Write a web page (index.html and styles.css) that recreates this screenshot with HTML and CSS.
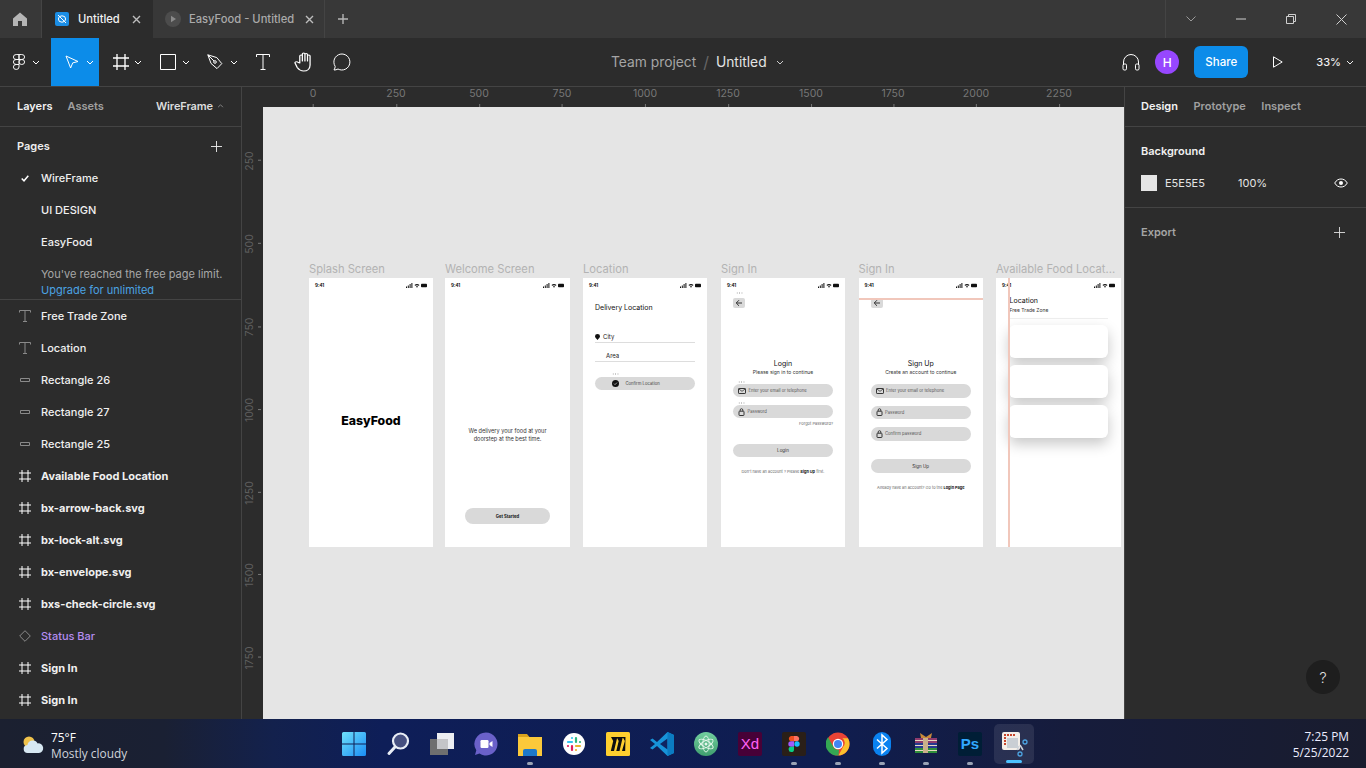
FILE: index.html
```html
<!DOCTYPE html>
<html lang="en">
<head>
<meta charset="utf-8">
<title>Untitled – Figma</title>
<link rel="stylesheet" href="styles.css">
</head>
<body>
<svg class="defs" width="0" height="0" aria-hidden="true">
  <symbol id="i-frame" viewBox="0 0 12 12"><path d="M3 0v12M9 0v12M0 3h12M0 9h12" fill="none" stroke="currentColor"/></symbol>
  <symbol id="i-text" viewBox="0 0 12 12"><path d="M.5 2.500V.5h11v2M6 .5v11M4 11.500h4" fill="none" stroke="currentColor"/></symbol>
  <symbol id="i-rect" viewBox="0 0 12 6"><path d="M1.500 1.500h9v3h-9z" fill="none" stroke="currentColor"/></symbol>
  <symbol id="i-chev" viewBox="0 0 8 5"><path d="M1 1l3 3 3-3" fill="none" stroke="currentColor"/></symbol>
  <symbol id="i-plus" viewBox="0 0 12 12"><path d="M6 0v12M0 6h12" fill="none" stroke="currentColor"/></symbol>
  <symbol id="i-signal" viewBox="0 0 21 5">
    <path d="M0 3.500h1V5H0zM1.800 2.500h1V5h-1zM3.600 1h1v4h-1zM5.400 0h1v5h-1z" fill="#111"/>
    <path d="M8.500 2a4 4 0 0 1 5 0l-.7.800a3 3 0 0 0-3.600 0zM10 3.400a1.600 1.600 0 0 1 2 0L11 4.800z" fill="#111"/>
    <rect x="15" y=".8" width="6" height="3.400" rx=".8" fill="#111"/>
  </symbol>
  <symbol id="i-mail" viewBox="0 0 8 6"><rect x=".5" y=".5" width="7" height="5" rx=".6" fill="none" stroke="#222" stroke-width=".9"/><path d="M.8 1l3.200 2.300L7.200 1" fill="none" stroke="#222" stroke-width=".7"/></symbol>
  <symbol id="i-lock" viewBox="0 0 7 8"><rect x="1" y="3.200" width="5" height="4.300" rx=".6" fill="none" stroke="#222" stroke-width=".9"/><path d="M2.200 3.200V2a1.300 1.300 0 0 1 2.600 0v1.200" fill="none" stroke="#222" stroke-width=".8"/></symbol>
  <symbol id="i-back" viewBox="0 0 8 8"><path d="M7 4H1.500M4 1.200L1.200 4 4 6.800" fill="none" stroke="#222" stroke-width=".9"/></symbol>
</svg>

<header class="titlebar">
  <div class="home">
    <svg width="14" height="14" viewBox="0 0 14 14"><path d="M7 .5L14 6.500V14H9V9H5v5H0V6.500z" fill="#b5b5b5"/></svg>
  </div>
  <div class="tab tab-active">
    <svg class="tab-icon" width="14" height="14" viewBox="0 0 14 14"><rect width="14" height="14" rx="2" fill="#1b8de4"/><ellipse cx="7" cy="7" rx="3.600" ry="3.200" fill="none" stroke="#fff" stroke-width="1"/><path d="M3 3l8 8" stroke="#fff" stroke-width="1"/></svg>
    <span class="tab-name">Untitled</span>
    <svg class="tab-x" width="9" height="9" viewBox="0 0 9 9"><path d="M1 1l7 7M8 1L1 8" stroke="#bdbdbd" stroke-width="1.400"/></svg>
  </div>
  <div class="tab tab-other">
    <svg class="tab-icon" width="16" height="16" viewBox="0 0 16 16"><circle cx="8" cy="8" r="8" fill="#4c4c4c"/><path d="M6 4.800v6.400L11 8z" fill="#8a8a8a"/></svg>
    <span class="tab-name">EasyFood - Untitled</span>
    <svg class="tab-x" width="9" height="9" viewBox="0 0 9 9"><path d="M1 1l7 7M8 1L1 8" stroke="#bdbdbd" stroke-width="1.400"/></svg>
  </div>
  <div class="newtab">
    <svg width="10" height="10" viewBox="0 0 10 10"><path d="M5 0v10M0 5h10" stroke="#b5b5b5" stroke-width="1.400"/></svg>
  </div>
  <div class="spacer"></div>
  <div class="winctl">
    <div class="winbtn"><svg width="10" height="6" viewBox="0 0 10 6"><path d="M.5.500L5 5 9.500.500" fill="none" stroke="#9a9a9a"/></svg></div>
    <div class="winbtn"><svg width="10" height="2" viewBox="0 0 10 2"><path d="M0 1h10" stroke="#cfcfcf"/></svg></div>
    <div class="winbtn"><svg width="10" height="10" viewBox="0 0 10 10"><path d="M.5 2.500h7v7h-7zM2.500 2.500v-2h7v7h-2" fill="none" stroke="#cfcfcf"/></svg></div>
    <div class="winbtn"><svg width="11" height="11" viewBox="0 0 11 11"><path d="M.5.500l10 10M10.500.500l-10 10" stroke="#cfcfcf"/></svg></div>
  </div>
</header>

<div class="toolbar">
  <div class="tools">
    <div class="tool tool-menu">
      <svg width="12" height="16" viewBox="0 0 12 18" preserveAspectRatio="none"><g fill="none" stroke="#fff" stroke-width="1"><path d="M6 .6H3.200a2.700 2.700 0 0 0 0 5.600H6z"/><path d="M6 .6h2.800a2.700 2.700 0 0 1 0 5.600H6z"/><path d="M6 6.200H3.200a2.700 2.700 0 0 0 0 5.600H6z"/><circle cx="8.800" cy="9" r="2.800"/><path d="M6 11.800H3.200a2.800 2.800 0 1 0 2.800 2.800z"/></g></svg>
      <svg class="chev" width="8" height="5"><use href="#i-chev"/></svg>
    </div>
    <div class="tool tool-move">
      <svg width="14" height="14" viewBox="0 0 14 14"><path d="M1 1l12 5.500-5.300 1.400L5.600 13z" fill="none" stroke="#fff" stroke-width="1"/></svg>
      <svg class="chev" width="8" height="5"><use href="#i-chev"/></svg>
    </div>
    <div class="tool tool-frame">
      <svg width="16" height="16"><use href="#i-frame"/></svg>
      <svg class="chev" width="8" height="5"><use href="#i-chev"/></svg>
    </div>
    <div class="tool tool-shape">
      <svg width="16" height="16" viewBox="0 0 16 16"><path d="M.5.500h15v15H.5z" fill="none" stroke="#fff"/></svg>
      <svg class="chev" width="8" height="5"><use href="#i-chev"/></svg>
    </div>
    <div class="tool tool-pen">
      <svg width="16" height="16" viewBox="0 0 16 16"><path d="M.8.800l9 2.800 5 6-4.800 5-6-5.200zM.8.800l6.300 6.300" fill="none" stroke="#fff"/><circle cx="8" cy="8" r="1.300" fill="none" stroke="#fff"/></svg>
      <svg class="chev" width="8" height="5"><use href="#i-chev"/></svg>
    </div>
    <div class="tool tool-text">
      <svg width="14" height="16" viewBox="0 0 14 16"><path d="M.5 3V.5h13V3M7 .5v15M4.500 15.500h5" fill="none" stroke="#fff"/></svg>
    </div>
    <div class="tool tool-hand">
      <svg width="18" height="20" viewBox="0 0 14 20" preserveAspectRatio="none"><path d="M4.500 11V4a1 1 0 0 1 2 0v5V2a1 1 0 0 1 2 0v7V2.500a1 1 0 0 1 2 0V9V4a1 1 0 0 1 2 0v9c0 3.500-2 6-5 6-2.500 0-3.500-1-5-3.500L1 11.500c-.8-1.400 1-2.400 2-1.300z" fill="none" stroke="#fff" stroke-linejoin="round"/></svg>
    </div>
    <div class="tool tool-comment">
      <svg width="18" height="18" viewBox="0 0 18 18"><path d="M1 17c.8-1.500 1.200-2.500 1.200-3.600A8 8 0 1 1 5 16c-1.500.8-2.500 1-4 1z" fill="none" stroke="#fff" stroke-linejoin="round"/></svg>
    </div>
  </div>
  <div class="filename">
    <span class="team">Team project</span><span class="slash">/</span><span class="fname">Untitled</span>
    <svg class="chev" width="8" height="5"><use href="#i-chev"/></svg>
  </div>
  <div class="actions">
    <svg class="phones" width="18" height="18" viewBox="0 0 18 18"><path d="M1.500 12V9a7.500 7.500 0 0 1 15 0v3" fill="none" stroke="#fff"/><rect x="1" y="11" width="3.500" height="6" rx="1.200" fill="none" stroke="#fff"/><rect x="13.500" y="11" width="3.500" height="6" rx="1.200" fill="none" stroke="#fff"/></svg>
    <div class="avatar">H</div>
    <div class="share">Share</div>
    <svg class="play" width="10" height="12" viewBox="0 0 10 12"><path d="M.5.800v10.400L9.200 6z" fill="none" stroke="#fff"/></svg>
    <div class="zoomlvl">33% <svg class="chev" width="8" height="5"><use href="#i-chev"/></svg></div>
  </div>
</div>

<main class="workspace">
  <aside class="left">
    <div class="ptabs">
      <span class="ptab ptab-on">Layers</span><span class="ptab">Assets</span>
      <span class="ppage">WireFrame <svg class="up" width="7" height="4" viewBox="0 0 8 5"><path d="M1 4l3-3 3 3" fill="none" stroke="#999"/></svg></span>
    </div>
    <div class="pages-head"><span>Pages</span><svg width="11" height="11"><use href="#i-plus"/></svg></div>
    <div class="page-row"><svg class="check" width="8" height="7" viewBox="0 0 8 7"><path d="M.7 3.500L3 5.800 7.300.8" fill="none" stroke="#fff" stroke-width="1.500"/></svg><span>WireFrame</span></div>
    <div class="page-row"><span>UI DESIGN</span></div>
    <div class="page-row"><span>EasyFood</span></div>
    <div class="limit">You've reached the free page limit.<br><span class="upgrade">Upgrade for unlimited</span></div>
    <ul class="layers">
      <li class="layer"><svg class="lic lic-dim" width="12" height="12"><use href="#i-text"/></svg>Free Trade Zone</li>
      <li class="layer"><svg class="lic lic-dim" width="12" height="12"><use href="#i-text"/></svg>Location</li>
      <li class="layer"><svg class="lic lic-dim" width="12" height="6"><use href="#i-rect"/></svg>Rectangle 26</li>
      <li class="layer"><svg class="lic lic-dim" width="12" height="6"><use href="#i-rect"/></svg>Rectangle 27</li>
      <li class="layer"><svg class="lic lic-dim" width="12" height="6"><use href="#i-rect"/></svg>Rectangle 25</li>
      <li class="layer layer-b"><svg class="lic" width="12" height="12"><use href="#i-frame"/></svg>Available Food Location</li>
      <li class="layer layer-b"><svg class="lic" width="12" height="12"><use href="#i-frame"/></svg>bx-arrow-back.svg</li>
      <li class="layer layer-b"><svg class="lic" width="12" height="12"><use href="#i-frame"/></svg>bx-lock-alt.svg</li>
      <li class="layer layer-b"><svg class="lic" width="12" height="12"><use href="#i-frame"/></svg>bx-envelope.svg</li>
      <li class="layer layer-b"><svg class="lic" width="12" height="12"><use href="#i-frame"/></svg>bxs-check-circle.svg</li>
      <li class="layer layer-c"><svg class="lic lic-dim" width="12" height="12" viewBox="0 0 12 12"><path d="M6 .7L11.300 6 6 11.300.7 6z" fill="none" stroke="currentColor"/></svg>Status Bar</li>
      <li class="layer layer-b"><svg class="lic" width="12" height="12"><use href="#i-frame"/></svg>Sign In</li>
      <li class="layer layer-b"><svg class="lic" width="12" height="12"><use href="#i-frame"/></svg>Sign In</li>
    </ul>
  </aside>

  <section class="stage">
    <div class="ruler-top">
      <span class="rt rt0">0</span><span class="rt rt1">250</span><span class="rt rt2">500</span><span class="rt rt3">750</span><span class="rt rt4">1000</span><span class="rt rt5">1250</span><span class="rt rt6">1500</span><span class="rt rt7">1750</span><span class="rt rt8">2000</span><span class="rt rt9">2250</span>
    </div>
    <div class="stage-body">
      <div class="ruler-left">
        <span class="rl rl1">250</span><span class="rl rl2">500</span><span class="rl rl3">750</span><span class="rl rl4">1000</span><span class="rl rl5">1250</span><span class="rl rl6">1500</span><span class="rl rl7">1750</span>
      </div>
      <div class="canvas">
        <!-- Splash -->
        <div class="phone p1">
          <div class="plabel">Splash Screen</div>
          <div class="status"><span>9:41</span><svg width="21" height="5"><use href="#i-signal"/></svg></div>
          <div class="logo">EasyFood</div>
        </div>
        <!-- Welcome -->
        <div class="phone p2">
          <div class="plabel">Welcome Screen</div>
          <div class="status"><span>9:41</span><svg width="21" height="5"><use href="#i-signal"/></svg></div>
          <p class="welcome">We delivery your food at your<br>doorstep at the best time.</p>
          <div class="cta">Get Started</div>
        </div>
        <!-- Location -->
        <div class="phone p3">
          <div class="plabel">Location</div>
          <div class="status"><span>9:41</span><svg width="21" height="5"><use href="#i-signal"/></svg></div>
          <div class="inner">
            <div class="loc-title">Delivery Location</div>
            <div class="loc-row loc-city"><svg width="5" height="6" viewBox="0 0 5 6"><path d="M2.500 6C1 4.300 0 3.400 0 2.300a2.500 2.300 0 0 1 5 0C5 3.400 4 4.300 2.500 6z" fill="#111"/></svg><span>City</span></div>
            <div class="loc-row loc-area"><span>Area</span></div>
            <div class="dots dots-loc"></div>
            <div class="pill pill-loc"><svg width="7" height="7" viewBox="0 0 7 7"><circle cx="3.500" cy="3.500" r="3.500" fill="#111"/><path d="M2 3.600l1 1 2-2" fill="none" stroke="#ddd" stroke-width=".7"/></svg><span>Confirm Location</span></div>
          </div>
        </div>
        <!-- Sign in -->
        <div class="phone p4">
          <div class="plabel">Sign In</div>
          <div class="status"><span>9:41</span><svg width="21" height="5"><use href="#i-signal"/></svg></div>
          <div class="inner">
            <div class="dots dots-back"></div>
            <div class="backbtn backbtn-in"><svg width="8" height="8"><use href="#i-back"/></svg></div>
            <div class="au-title">Login</div>
            <div class="au-sub">Please sign in to continue</div>
            <div class="dots dots-field"></div>
            <div class="pill field field-tight"><svg width="8" height="6"><use href="#i-mail"/></svg><span>Enter your email or telephone</span></div>
            <div class="dots dots-field"></div>
            <div class="pill field field-tight"><svg width="7" height="8"><use href="#i-lock"/></svg><span>Password</span></div>
            <div class="forgot">Forgot Password?</div>
            <div class="pill submit submit-in">Login</div>
            <div class="foot">Don't have an account ? Please <b>Sign Up</b> first.</div>
          </div>
        </div>
        <!-- Sign up -->
        <div class="phone p5">
          <div class="plabel">Sign In</div>
          <div class="status"><span>9:41</span><svg width="21" height="5"><use href="#i-signal"/></svg></div>
          <div class="inner">
            <div class="backbtn backbtn-up"><svg width="8" height="8"><use href="#i-back"/></svg></div>
            <div class="au-title">Sign Up</div>
            <div class="au-sub">Create an account to continue</div>
            <div class="pill field"><svg width="8" height="6"><use href="#i-mail"/></svg><span>Enter your email or telephone</span></div>
            <div class="pill field"><svg width="7" height="8"><use href="#i-lock"/></svg><span>Password</span></div>
            <div class="pill field"><svg width="7" height="8"><use href="#i-lock"/></svg><span>Confirm password</span></div>
            <div class="pill submit submit-up">Sign Up</div>
            <div class="foot">Already have an account? Go to the <b>Login Page</b></div>
          </div>
        </div>
        <!-- Available -->
        <div class="phone p6">
          <div class="plabel">Available Food Locat...</div>
          <div class="status"><span>9:41</span><svg width="21" height="5"><use href="#i-signal"/></svg></div>
          <div class="avail">
            <div class="av-title">Location</div>
            <div class="av-sub">Free Trade Zone</div>
            <div class="av-rule"></div>
            <div class="av-card"></div>
            <div class="av-card"></div>
            <div class="av-card"></div>
          </div>
        </div>
        <div class="guide guide-h"></div>
        <div class="guide guide-v"></div>
      </div>
    </div>
  </section>

  <aside class="right">
    <div class="ptabs rtabs">
      <span class="ptab ptab-on">Design</span><span class="ptab">Prototype</span><span class="ptab">Inspect</span>
    </div>
    <div class="bg-sec">
      <div class="bg-title">Background</div>
      <div class="bg-row">
        <span class="swatch"></span><span class="hex">E5E5E5</span><span class="pct">100%</span>
        <svg class="eye" width="14" height="10" viewBox="0 0 14 10"><path d="M.7 5C2.500 2 4.500 1 7 1s4.500 1 6.300 4C11.500 8 9.500 9 7 9S2.500 8 .7 5z" fill="none" stroke="#fff"/><circle cx="7" cy="5" r="2" fill="#fff"/></svg>
      </div>
    </div>
    <div class="export"><span>Export</span><svg width="11" height="11"><use href="#i-plus"/></svg></div>
    <div class="help">?</div>
  </aside>
</main>

<footer class="taskbar">
  <div class="weather">
    <svg width="22" height="18" viewBox="0 0 22 18"><circle cx="7" cy="6" r="5.500" fill="#f0c24b"/><path d="M6 17a4 4 0 0 1-.6-8 5.500 5.500 0 0 1 10.300-1.600A4.800 4.800 0 0 1 17 17z" fill="#d7e8f2"/></svg>
    <div class="wtext"><div class="wtemp">75°F</div><div class="wdesc">Mostly cloudy</div></div>
  </div>
  <div class="tasks">
    <div class="task"><svg width="24" height="24" viewBox="0 0 24 24"><defs><linearGradient id="g-win" x1="0" y1="0" x2="1" y2="1"><stop offset="0" stop-color="#6fe0fb"/><stop offset="1" stop-color="#1a8df5"/></linearGradient></defs><path d="M0 1.500A1.500 1.500 0 0 1 1.500 0h10v11.500H0zM12.500 0h10A1.500 1.500 0 0 1 24 1.500v10H12.500zM0 12.500h11.500V24h-10A1.500 1.500 0 0 1 0 22.500zM12.500 12.500H24v10a1.500 1.500 0 0 1-1.500 1.500h-10z" fill="url(#g-win)"/></svg></div>
    <div class="task"><svg width="24" height="24" viewBox="0 0 24 24"><circle cx="14.500" cy="9" r="7.500" fill="#465080" stroke="#e8edf5" stroke-width="2.200"/><path d="M9 15l-6 6.500" stroke="#e8edf5" stroke-width="3" stroke-linecap="round"/></svg></div>
    <div class="task"><svg width="24" height="24" viewBox="0 0 24 24"><rect x="7" y="1" width="17" height="16" fill="#eceef2"/><rect x="0" y="7" width="18" height="16" fill="#6f6f6f"/><rect x="7" y="7" width="11" height="10" fill="#c4c5c8"/></svg></div>
    <div class="task"><svg width="24" height="24" viewBox="0 0 24 24"><path d="M12 .5a11.500 11.500 0 1 1-6.500 21L1 23l1.300-4.700A11.500 11.500 0 0 1 12 .5z" fill="#6a61c9"/><rect x="6.500" y="8" width="8" height="8" rx="1.200" fill="#fff"/><path d="M15.500 11l3-2v6l-3-2z" fill="#fff"/></svg></div>
    <div class="task task-run"><svg width="24" height="24" viewBox="0 0 24 24"><path d="M0 2h9l2.500 3H24v3H0z" fill="#d9a21e"/><path d="M0 5h24v19H0z" fill="#fbc93b"/><path d="M5 24v-5a2 2 0 0 1 2-2h10a2 2 0 0 1 2 2v5z" fill="#1e79c9"/></svg></div>
    <div class="task"><svg width="22" height="22" viewBox="0 0 22 22"><circle cx="11" cy="11" r="11" fill="#fff"/><g stroke-width="2.200" stroke-linecap="round"><path d="M9 5v0M9 9H5" stroke="#36c5f0"/><path d="M13 5v4M17 9h0" stroke="#2eb67d"/><path d="M13 17v0M13 13h4" stroke="#ecb22e"/><path d="M9 17v-4M5 13h0" stroke="#e01e5a"/></g></svg></div>
    <div class="task"><svg width="24" height="24" viewBox="0 0 24 24"><rect width="24" height="24" rx="1.500" fill="#ffd02f"/><path d="M8.500 5h2.800L8 19H4.800l2.400-10L5 5zM14 5h2.800L13.500 19h-3.200l2.400-10-2.200-4zM19.500 5h-2.800l2.200 4L16 19h3.200z" fill="#0e0e10"/></svg></div>
    <div class="task"><svg width="24" height="24" viewBox="0 0 24 24"><path d="M17.500 0L24 3v18l-6.500 3L7 14l-4.500 3.500L0 16l5-4-5-4 2.500-1.500L7 10z" fill="#1793d8"/><path d="M17.500 6.500L10 12l7.500 5.500z" fill="#0f2560"/><path d="M17.500 0L24 3v18l-6.500 3z" fill="#0b7cc2"/></svg></div>
    <div class="task"><svg width="24" height="24" viewBox="0 0 24 24"><defs><linearGradient id="g-atom" x1="0" y1="0" x2="0" y2="1"><stop offset="0" stop-color="#72cf9f"/><stop offset="1" stop-color="#3f9e6e"/></linearGradient></defs><circle cx="12" cy="12" r="12" fill="url(#g-atom)"/><g fill="none" stroke="#e6f7ec" stroke-width=".9"><ellipse cx="12" cy="12" rx="8" ry="3.200" transform="rotate(30 12 12)"/><ellipse cx="12" cy="12" rx="8" ry="3.200" transform="rotate(90 12 12)"/><ellipse cx="12" cy="12" rx="8" ry="3.200" transform="rotate(150 12 12)"/></g><circle cx="12" cy="12" r="1.500" fill="#e6f7ec"/></svg></div>
    <div class="task"><div class="appbox appbox-xd">Xd</div></div>
    <div class="task task-run"><svg width="24" height="24" viewBox="0 0 24 24"><rect width="24" height="24" rx="2" fill="#2a1f18"/><path d="M12 4H9a2.700 2.700 0 0 0 0 5.300h3z" fill="#f24e1e"/><path d="M12 4h3a2.700 2.700 0 0 1 0 5.300h-3z" fill="#ff7262"/><path d="M12 9.300H9a2.700 2.700 0 0 0 0 5.400h3z" fill="#a259ff"/><circle cx="15" cy="12" r="2.700" fill="#1abcfe"/><path d="M12 14.700H9A2.700 2.700 0 1 0 12 17.400z" fill="#0acf83"/></svg></div>
    <div class="task task-run"><svg width="24" height="24" viewBox="0 0 24 24"><circle cx="12" cy="12" r="11.500" fill="#ea4335"/><path d="M22 6.300a11.500 11.500 0 0 1-9.500 17.200L17 15a5.700 5.700 0 0 0-.6-8.700z" fill="#fbc02d"/><path d="M12.500 23.500A11.500 11.500 0 0 1 2 5.200l5 8.700a5.700 5.700 0 0 0 6 3.700z" fill="#34a853"/><circle cx="12" cy="12" r="5.200" fill="#fff"/><circle cx="12" cy="12" r="4" fill="#4285f4"/></svg></div>
    <div class="task task-run"><svg width="18" height="24" viewBox="0 0 18 24"><rect width="18" height="24" rx="9" fill="#0a82f0"/><path d="M4 7.500l10 9-5 4.500V3l5 4.500-10 9" fill="none" stroke="#fff" stroke-width="1.500"/></svg></div>
    <div class="task task-run"><svg width="24" height="22" viewBox="0 0 24 22"><path d="M6 0l6 4 6-4-1 5H7z" fill="#c98a3a"/><rect x="1" y="5" width="22" height="5" fill="#8e3b6d"/><rect x="1" y="7" width="22" height="1" fill="#e6d9c0"/><rect x="1" y="10" width="22" height="5" fill="#27398f"/><rect x="1" y="12" width="22" height="1" fill="#e6d9c0"/><rect x="1" y="15" width="22" height="5" fill="#2f8f3a"/><rect x="1" y="17" width="22" height="1" fill="#e6d9c0"/><rect x="9" y="5" width="5" height="15" fill="#c9b08a"/></svg></div>
    <div class="task task-run"><div class="appbox appbox-ps">Ps</div></div>
    <div class="task task-active">
      <svg width="30" height="30" viewBox="0 0 30 30"><rect x="3" y="3" width="18" height="18" rx="2" fill="#f3eee9"/><path d="M5 5h2v2H5zM8 5h2v2H8zM11 5h2v2h-2zM14 5h2v2h-2zM5 8h2v2H5zM5 11h2v2H5zM5 14h2v2H5z" fill="#c6452c"/><rect x="8" y="9" width="11" height="10" fill="#c9ced4"/><path d="M20 17l-2 4M21 16l3 5" stroke="#cfd4da" stroke-width="1.500"/><circle cx="26" cy="13" r="2" fill="none" stroke="#4da3e0" stroke-width="1.300"/><circle cx="21" cy="25" r="2" fill="none" stroke="#4da3e0" stroke-width="1.300"/></svg>
    </div>
  </div>
  <div class="clock"><div>7:25 PM</div><div>5/25/2022</div></div>
</footer>
</body>
</html>
```

FILE: styles.css
```css
* { box-sizing: border-box; }
html, body { margin: 0; padding: 0; }
body {
  width: 1366px; height: 768px; overflow: hidden;
  display: flex; flex-direction: column;
  background: #2c2c2c; color: #fff;
  font-family: Inter, "Liberation Sans", sans-serif;
  font-size: 11px;
}
.defs { position: absolute; }
svg { display: block; flex: none; }

/* title bar */
.titlebar { height: 38px; flex: none; display: flex; background: #383838; color: #fff; }
.home { width: 42px; display: flex; align-items: center; justify-content: center; border-right: 1px solid #444; padding-right: 1px; }
.tab { display: flex; align-items: center; font-size: 11.200px; }
.tab-active { width: 111px; background: #2c2c2c; padding-left: 13px; color: #f0f0f0; font-weight: 500; }
.tab-active .tab-icon { margin-right: 9px; }
.tab-active .tab-x { margin-left: 12px; }
.tab-other { width: 172px; border-right: 1px solid #444; padding-left: 12px; color: #aaa; font-weight: 500; }
.tab-other .tab-icon { margin-right: 8px; }
.tab-other .tab-x { margin-left: 11px; }
.newtab { width: 36px; display: flex; align-items: center; justify-content: center; }
.spacer { flex: 1; }
.winctl { width: 201px; display: flex; border-left: 1px solid #444; }
.winbtn { width: 50px; display: flex; align-items: center; justify-content: center; }

/* toolbar */
.toolbar { height: 49px; flex: none; display: flex; align-items: stretch; justify-content: space-between; background: #2c2c2c; border-bottom: 1px solid #444; position: relative; }
.tools { display: flex; }
.tool { display: flex; align-items: center; height: 48px; color: #fff; }
.tool-menu { width: 51px; padding-left: 13px; }
.tool-menu .chev { margin-left: 7px; }
.tool-move { width: 48px; padding-left: 14px; background: #0c8ce9; }
.tool-move .chev { margin-left: 7px; }
.tool-frame { width: 51px; padding-left: 14px; }
.tool-frame .chev { margin-left: 5px; }
.tool-shape { width: 49px; padding-left: 10px; }
.tool-shape .chev { margin-left: 6px; }
.tool-pen { width: 46px; padding-left: 8px; }
.tool-pen .chev { margin-left: 7px; }
.tool-text { width: 36px; padding-left: 11px; }
.tool-hand { width: 40px; padding-left: 13px; }
.tool-comment { width: 40px; padding-left: 12px; }
.filename { position: absolute; left: 611px; top: 0; height: 48px; display: flex; align-items: center; font-size: 13.800px; }
.team { color: #a5a5a5; }
.slash { color: #666; margin: 0 7px; font-size: 16px; }
.fname { color: #e4e4e4; }
.filename .chev { margin-left: 9px; color: #ccc; }
.actions { display: flex; align-items: center; padding-right: 12px; }
.phones { margin-right: 15px; }
.avatar { width: 24px; height: 24px; border-radius: 50%; background: #9747ff; font-size: 12px; font-weight: 500; display: flex; align-items: center; justify-content: center; margin-right: 15px; }
.share { width: 54px; height: 32px; border-radius: 6px; background: #0c8ce9; font-size: 11.500px; font-weight: 500; display: flex; align-items: center; justify-content: center; margin-right: 25px; }
.play { margin-right: 33px; }
.zoomlvl { display: flex; align-items: center; gap: 5px; font-size: 11px; font-weight: 500; color: #eee; }

/* workspace */
.workspace { flex: 1; min-height: 0; display: flex; }
.left { width: 242px; flex: none; border-right: 1px solid #444; background: #2c2c2c; overflow: hidden; }
.right { width: 242px; flex: none; border-left: 1px solid #444; background: #2c2c2c; position: relative; }
.ptabs { height: 40px; display: flex; align-items: center; padding: 0 0 2px 17px; border-bottom: 1px solid #444; font-size: 11px; font-weight: 600; }
.ptab { color: #a0a0a0; margin-right: 15px; }
.ptab-on { color: #f2f2f2; }
.ppage { margin-left: auto; margin-right: 17px; color: #ddd; display: flex; align-items: center; gap: 4px; letter-spacing: -.1px; }
.pages-head { height: 35px; padding: 3px 19px 0 17px; display: flex; align-items: center; justify-content: space-between; font-weight: 600; color: #eee; }
.page-row { height: 32px; padding-left: 41px; display: flex; align-items: center; position: relative; font-weight: 500; color: #f0f0f0; }
.check { position: absolute; left: 21px; top: 13px; }
.limit { height: 42px; padding: 8px 0 0 41px; line-height: 16px; color: #a8a8a8; border-bottom: 1px solid #444; }
.upgrade { color: #4ba3e3; }
.layers { list-style: none; margin: 0; padding: 0; }
.layer { height: 32px; display: flex; align-items: center; padding-left: 41px; position: relative; color: #f0f0f0; font-weight: 500; }
.layer-b { font-weight: 700; }
.layer-c { color: #b48df0; }
.lic { position: absolute; left: 19px; color: #fff; }
.lic-dim { color: #8a8a8a; }

/* stage */
.stage { flex: 1; min-width: 0; display: flex; flex-direction: column; background: #2c2c2c; }
.ruler-top { height: 20px; flex: none; position: relative; margin-left: 21px; overflow: hidden; }
.rt { position: absolute; top: 0; font-size: 10.500px; line-height: 13px; color: #777; transform: translateX(-50%); }
.rt::after { content: ""; position: absolute; left: 50%; top: 17px; width: 1px; height: 3px; background: #777; }
.rt0 { left: 50px; } .rt1 { left: 133px; } .rt2 { left: 216px; } .rt3 { left: 299px; } .rt4 { left: 382px; }
.rt5 { left: 465px; } .rt6 { left: 548px; } .rt7 { left: 630px; } .rt8 { left: 713px; } .rt9 { left: 796px; }
.stage-body { flex: 1; min-height: 0; display: flex; }
.ruler-left { width: 21px; flex: none; position: relative; overflow: hidden; }
.rl { position: absolute; left: 1px; font-size: 10.500px; line-height: 13px; color: #5f5f5f; writing-mode: vertical-rl; transform: translateY(-50%) rotate(180deg); }
.rl::after { content: ""; position: absolute; top: 50%; left: -5.500px; width: 3px; height: 1px; background: #777; }
.rl1 { top: 54px; } .rl2 { top: 137px; } .rl3 { top: 220px; } .rl4 { top: 303px; } .rl5 { top: 386px; } .rl6 { top: 468px; } .rl7 { top: 551px; }
.canvas { flex: 1; min-width: 0; position: relative; background: #e5e5e5; overflow: hidden; }

/* phones on the canvas */
.phone { position: absolute; top: 171px; width: 124px; height: 269px; background: #fff; display: flex; flex-direction: column; font-family: Inter, "Open Sans", sans-serif; color: #111; }
.p1 { left: 46px; } .p2 { left: 182px; width: 125px; } .p3 { left: 320px; } .p4 { left: 458px; } .p5 { left: 595.500px; width: 124.500px; } .p6 { left: 733px; width: 125px; }
.plabel { position: absolute; left: 0; top: -16.500px; font-size: 11.200px; line-height: 15px; color: #b3b3b3; white-space: nowrap; }
.status { height: 14px; flex: none; display: flex; align-items: center; justify-content: space-between; padding: 0 6px; font-size: 4.500px; font-weight: 700; }
.logo { margin-top: 120px; line-height: 18px; text-align: center; font-size: 12.300px; font-weight: 800; color: #000; }
.welcome { margin: 135px 0 0; font-size: 5.600px; line-height: 8px; text-align: center; color: #333; }
.cta { margin: 65px 0 0 20px; width: 85px; height: 16px; border-radius: 8px; background: #d9d9d9; display: flex; align-items: center; justify-content: center; font-size: 4.200px; font-weight: 700; }
.inner { padding: 0 12px; display: flex; flex-direction: column; }
.pill { background: #d9d9d9; border-radius: 7px; display: flex; align-items: center; height: 13px; font-size: 4px; color: #444; }
.dots { width: 7px; height: 2px; background-image: radial-gradient(circle, #888 .4px, transparent .6px); background-size: 2.400px 2px; }
.loc-title { margin-top: 12px; line-height: 8px; font-size: 7px; font-weight: 400; }
.loc-row { display: flex; align-items: center; height: 12px; border-bottom: 1px solid #ddd; font-size: 6px; color: #222; }
.loc-city { margin-top: 19px; gap: 3px; }
.loc-area { margin-top: 7px; padding-left: 11px; }
.dots-loc { margin: 11px 0 0 17px; }
.pill-loc { margin-top: 2px; padding-left: 17px; gap: 6.500px; font-size: 4.200px; }
.backbtn { width: 12px; height: 10px; background: #d9d9d9; border-radius: 2px; display: flex; align-items: center; justify-content: center; }
.dots-back { margin: 0 0 0 3px; }
.backbtn-in { margin-top: 4px; }
.backbtn-up { margin-top: 6px; }
.au-title { font-size: 7px; line-height: 8px; font-weight: 400; text-align: center; margin-top: 52px; }
.au-sub { font-size: 5px; line-height: 8px; text-align: center; color: #333; }
.field { padding-left: 5px; gap: 2.500px; font-size: 4.200px; color: #555; margin-top: 8px; height: 13.500px; }
.field-tight { margin-top: 1px; height: 13px; }
.dots-field { margin: 5px 0 0 5px; }
.forgot { margin-top: 3px; font-size: 4px; line-height: 6px; text-align: right; color: #666; }
.submit { justify-content: center; font-size: 4.500px; color: #333; }
.submit-in { margin-top: 17px; }
.submit-up { margin-top: 18.500px; height: 14px; }
.foot { margin-top: 12px; font-size: 3.900px; line-height: 6px; text-align: center; color: #666; white-space: nowrap; }
.foot b { color: #111; }
.avail { padding-left: 13.500px; }
.av-title { margin-top: 5px; font-size: 7px; line-height: 8px; font-weight: 400; }
.av-sub { margin-top: 1px; font-size: 5px; line-height: 8px; color: #333; }
.av-rule { margin-top: 4px; width: 98px; height: 1px; background: #eee; }
.av-card { margin: 6px 0 7px -1px; width: 99px; height: 33px; background: #fff; border-radius: 6px; box-shadow: 0 6px 14px rgba(0, 0, 0, .22); }
.av-card + .av-card { margin-top: 0; }
.guide { position: absolute; background: #f1c7bb; }
.guide-h { left: 595.500px; top: 191px; width: 124.500px; height: 2px; }
.guide-v { left: 745px; top: 171px; width: 2px; height: 269px; }

/* right panel */
.rtabs { padding-left: 16px; }
.rtabs .ptab { margin-right: 15.500px; }
.bg-sec { height: 81px; padding: 0 0 0 16px; border-bottom: 1px solid #444; }
.bg-title { height: 48px; display: flex; align-items: center; font-weight: 600; color: #f0f0f0; }
.bg-row { height: 16px; display: flex; align-items: center; color: #e4e4e4; }
.swatch { width: 16px; height: 16px; background: #e5e5e5; margin-right: 8px; }
.hex { width: 73px; }
.eye { margin-left: 67px; }
.export { height: 48px; padding: 0 21px 0 16px; display: flex; align-items: center; justify-content: space-between; font-weight: 600; color: #a5a5a5; }
.export svg { color: #ddd; }
.help { position: absolute; left: 181px; top: 573px; width: 34px; height: 34px; border-radius: 50%; background: #1e1e1e; display: flex; align-items: center; justify-content: center; font-size: 15px; font-weight: 300; color: #ddd; }

/* taskbar */
.taskbar { height: 49px; flex: none; display: flex; align-items: center; position: relative; background: linear-gradient(90deg, #1b2030 0%, #1a2033 12%, #13214d 20%, #0e1e58 28%, #0f1d50 60%, #161c3c 78%, #191c2e 100%); }
.weather { width: 332px; padding: 2px 0 0 22px; display: flex; align-items: center; gap: 7px; }
.wtext { font-size: 11.900px; line-height: 16px; font-family: "Open Sans", "Noto Sans", sans-serif; }
.wtemp { color: #fff; }
.wdesc { color: #cfd3da; }
.tasks { display: flex; }
.task { width: 44px; height: 40px; display: flex; align-items: center; justify-content: center; position: relative; }
.task-run::after { content: ""; position: absolute; left: 19px; bottom: -1px; width: 6px; height: 2.500px; border-radius: 2px; background: #9aa3b5; }
.task-active { background: rgba(255, 255, 255, .09); border-radius: 5px; width: 40px; margin-left: 2px; }
.task-active::after { content: ""; position: absolute; left: 12px; bottom: 1px; width: 16px; height: 3px; border-radius: 2px; background: #4cc2ff; }
.appbox { width: 24px; height: 24px; border-radius: 2px; display: flex; align-items: center; justify-content: center; font-size: 15px; font-weight: 500; font-family: "Liberation Sans", sans-serif; }
.appbox-xd { background: #470137; color: #ff61f6; }
.appbox-ps { background: #001e36; color: #31a8ff; font-weight: 700; }
.clock { position: absolute; right: 17px; top: 8.500px; text-align: right; font-size: 11.900px; line-height: 16px; font-family: "Open Sans", "Noto Sans", sans-serif; color: #eef; }
```
